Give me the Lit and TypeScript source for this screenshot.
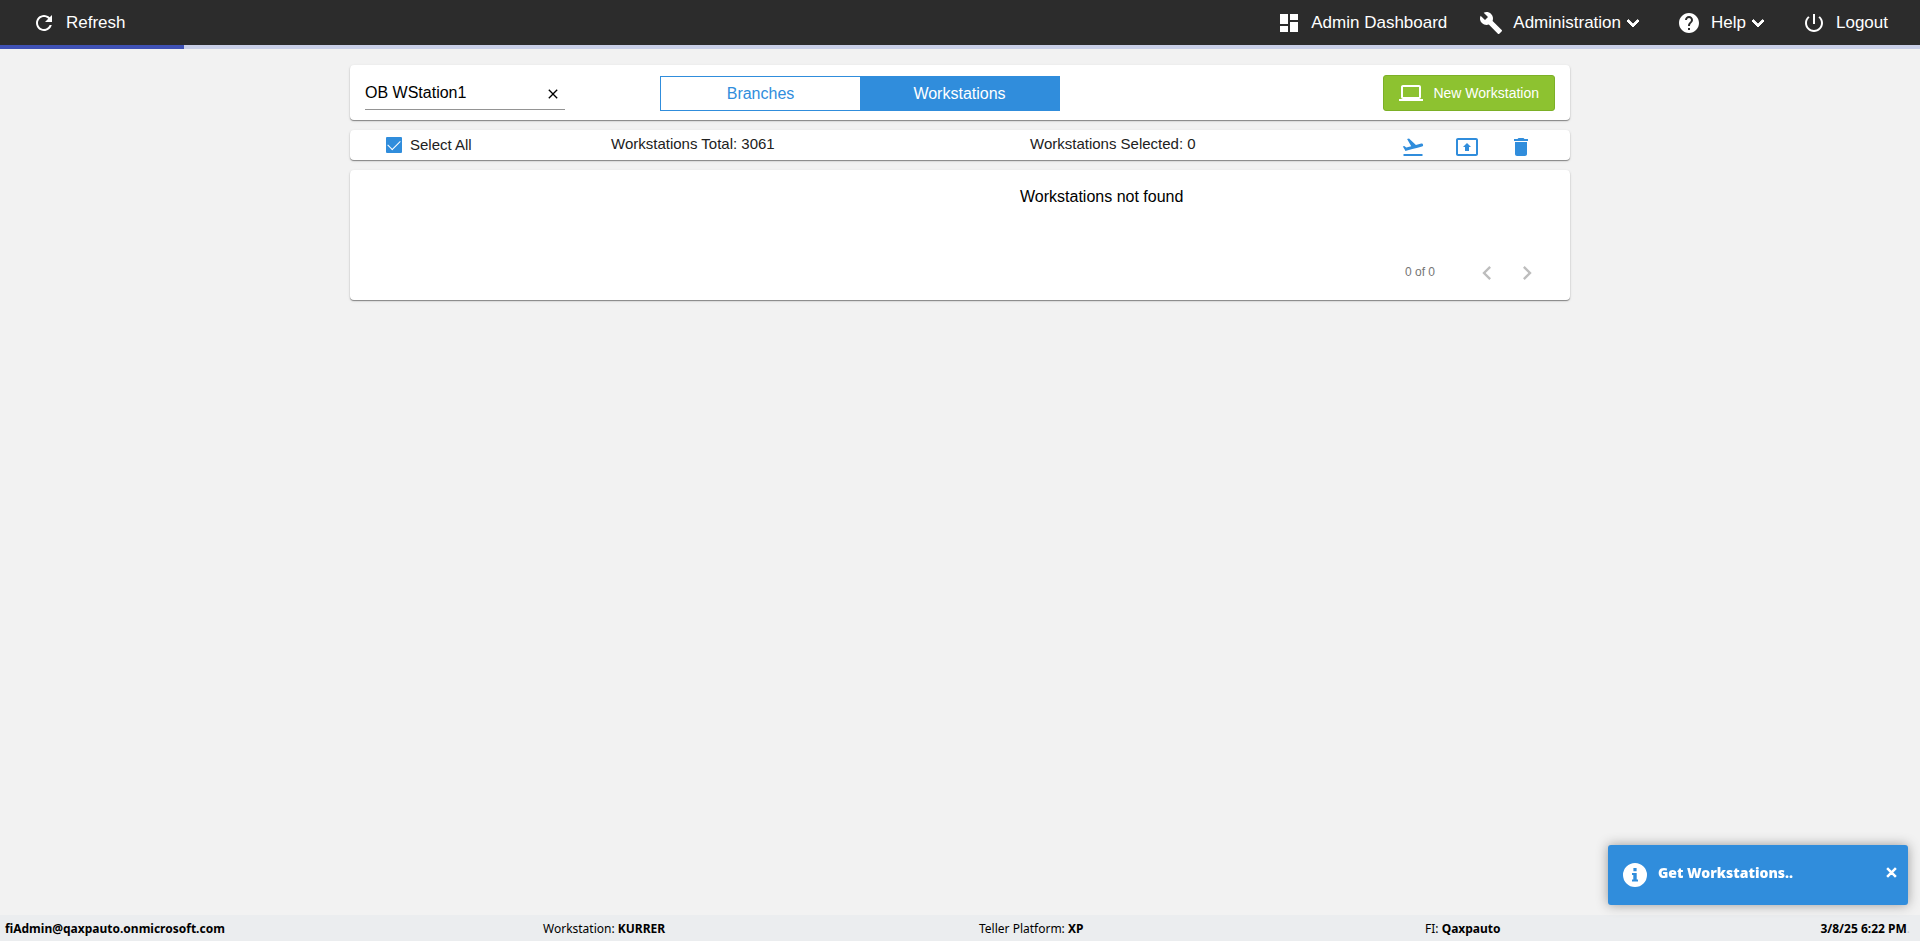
import { LitElement, html, svg, css } from "lit";
import { customElement, property, state } from "lit/decorators.js";

const icons: Record<string, string> = {
  refresh: "M17.65 6.35C16.2 4.9 14.21 4 12 4c-4.42 0-7.99 3.58-7.99 8s3.57 8 7.99 8c3.73 0 6.84-2.55 7.73-6h-2.08c-.82 2.33-3.04 4-5.65 4-3.31 0-6-2.69-6-6s2.69-6 6-6c1.66 0 3.14.69 4.22 1.78L13 11h7V4l-2.35 2.35z",
  dashboard: "M3 13h8V3H3v10zm0 8h8v-6H3v6zm10 0h8V11h-8v10zm0-18v6h8V3h-8z",
  build: "M22.7 19l-9.1-9.1c.9-2.3.4-5-1.5-6.9-2-2-5-2.4-7.4-1.3L9 6 6 9 1.6 4.7C.4 7.1.9 10.1 2.9 12.1c1.9 1.9 4.6 2.4 6.9 1.5l9.1 9.1c.4.4 1 .4 1.4 0l2.3-2.3c.5-.4.5-1.1.1-1.4z",
  help: "M12 2C6.48 2 2 6.48 2 12s4.48 10 10 10 10-4.48 10-10S17.52 2 12 2zm1 17h-2v-2h2v2zm2.07-7.75l-.9.92C13.45 12.9 13 13.5 13 15h-2v-.5c0-1.1.45-2.1 1.17-2.83l1.24-1.26c.37-.36.59-.86.59-1.41 0-1.1-.9-2-2-2s-2 .9-2 2H8c0-2.21 1.79-4 4-4s4 1.79 4 4c0 .88-.36 1.68-.93 2.25z",
  power: "M13 3h-2v10h2V3zm4.83 2.17l-1.42 1.42C17.99 7.86 19 9.81 19 12c0 3.87-3.13 7-7 7s-7-3.13-7-7c0-2.19 1.01-4.14 2.58-5.42L6.17 5.17C4.23 6.82 3 9.26 3 12c0 4.97 4.03 9 9 9s9-4.03 9-9c0-2.74-1.23-5.18-3.17-6.83z",
  expand: "M16.59 8.59L12 13.17 7.41 8.59 6 10l6 6 6-6z",
  close: "M19 6.41L17.59 5 12 10.59 6.41 5 5 6.41 10.59 12 5 17.59 6.41 19 12 13.41 17.59 19 19 17.59 13.41 12z",
  laptop: "M20 18c1.1 0 1.99-.9 1.99-2L22 6c0-1.100-.9-2-2-2H4c-1.100 0-2 .9-2 2v10c0 1.100.9 2 2 2H0v2h24v-2h-4zM4 6h16v10H4V6z",
  takeoff: "M2.500 19h19v2h-19zM22.070 9.640c-.21-.8-1.040-1.280-1.840-1.060L14.920 10l-6.900-6.430-1.930.51 4.140 7.170-4.970 1.330-1.970-1.540-1.450.39 1.820 3.160.77 1.330 1.600-.43 5.310-1.420 4.350-1.160L21 11.490c.81-.23 1.280-1.050 1.070-1.850z",
  present: "M21 3H3c-1.110 0-2 .89-2 2v14c0 1.110.89 2 2 2h18c1.110 0 2-.89 2-2V5c0-1.110-.89-2-2-2zm0 16.020H3V4.980h18v14.040zM10 12H8l4-4 4 4h-2v4h-4v-4z",
  trash: "M6 19c0 1.100.9 2 2 2h8c1.100 0 2-.9 2-2V7H6v12zM19 4h-3.500l-1-1h-5l-1 1H5v2h14V4z",
  left: "M15.410 7.410L14 6l-6 6 6 6 1.410-1.410L10.830 12z",
  right: "M10 6L8.590 7.410 13.170 12l-4.580 4.590L10 18l6-6z",
  info: "M12 0a12 12 0 1 0 0 24a12 12 0 1 0 0-24zM10.400 5h3.200v3.200h-3.200zM9 10h4.700v6.500h1.300V18.500H9v-2h1.300V12H9z",
};

@customElement("ui-icon")
class UiIcon extends LitElement {
  @property() name = "";
  static styles = css`
    :host { display: inline-flex; flex: none; width: 24px; height: 24px; }
    svg { width: 100%; height: 100%; fill: currentColor; fill-rule: evenodd; }
  `;
  render() {
    return html`<svg viewBox="0 0 24 24" aria-hidden="true">${svg`<path d=${icons[this.name] ?? ""}></path>`}</svg>`;
  }
}

@customElement("top-bar")
class TopBar extends LitElement {
  static styles = css`
    :host { display: block; }
    .bar {
      display: flex; justify-content: space-between; align-items: center;
      height: 45px; padding: 0 32px; background: #2c2c2c;
    }
    nav { display: flex; gap: 32px; }
    .item {
      display: flex; align-items: center; padding: 0; border: 0; background: none;
      color: #fff; font: 17px/24px "Liberation Sans", Arial, sans-serif;
      text-decoration: none; cursor: pointer;
    }
    .item span { margin-left: 10px; }
    .chevron { stroke: #fff; stroke-width: 1; }
    .progress { height: 4px; background: #c9cfe8; }
    .progress div { width: 9.6%; height: 100%; background: #3f51b5; }
  `;
  render() {
    return html`
      <header class="bar">
        <button class="item"><ui-icon name="refresh"></ui-icon><span>Refresh</span></button>
        <nav>
          <a class="item" href="#dashboard"><ui-icon name="dashboard"></ui-icon><span>Admin Dashboard</span></a>
          <button class="item"><ui-icon name="build"></ui-icon><span>Administration</span><ui-icon class="chevron" name="expand"></ui-icon></button>
          <button class="item"><ui-icon name="help"></ui-icon><span>Help</span><ui-icon class="chevron" name="expand"></ui-icon></button>
          <a class="item" href="#logout"><ui-icon name="power"></ui-icon><span>Logout</span></a>
        </nav>
      </header>
      <div class="progress" role="progressbar" aria-label="Loading"><div></div></div>
    `;
  }
}

@customElement("status-bar")
class StatusBar extends LitElement {
  static styles = css`
    footer {
      display: grid; grid-template-columns: 538fr 436fr 446fr 485fr; align-items: center;
      height: 26px; padding: 1px 10px 0 5px; box-sizing: border-box; background: #ebedef; color: #000;
      font: 12px/16px "Noto Sans", "Open Sans", sans-serif;
    }
    .end { display: flex; justify-content: space-between; }
    .dot { color: #c4c6c8; }
  `;
  render() {
    return html`
      <footer>
        <b>fiAdmin@qaxpauto.onmicrosoft.com</b>
        <span>Workstation: <b>KURRER</b></span>
        <span>Teller Platform: <b>XP</b></span>
        <div class="end">
          <span>FI: <b>Qaxpauto</b></span>
          <span><b>3/8/25 6:22 PM</b><span class="dot">.</span></span>
        </div>
      </footer>
    `;
  }
}

@customElement("app-root")
class AppRoot extends LitElement {
  @state() private query = "OB WStation1";

  static styles = css`
    :host {
      display: flex; flex-direction: column; min-height: 100vh;
      background: #f2f2f2; color: #000;
      font: 16px/20px "Liberation Sans", Arial, sans-serif;
    }
    * { box-sizing: border-box; }
    button { padding: 0; border: 0; background: none; color: inherit; font: inherit; cursor: pointer; }
    main {
      flex: 1; display: flex; flex-direction: column; gap: 10px;
      width: 100%; max-width: 1220px; margin: 0 auto; padding-top: 16px;
    }
    .card {
      background: #fff; border-radius: 4px;
      box-shadow: 0 1px 1px rgba(0, 0, 0, 0.4), 0 1px 3px rgba(0, 0, 0, 0.12);
    }
    .tools { display: flex; align-items: center; padding: 10px 15px 9px; }
    .search {
      display: flex; align-items: center; width: 200px; height: 34px;
      border-bottom: 1px solid #949494;
    }
    .search input {
      flex: 1; min-width: 0; padding: 1px 0 0; border: 0; outline: 0;
      background: none; color: #000; font: inherit;
    }
    .clear { display: flex; margin-right: 4px; padding-top: 3px; }
    .clear ui-icon { width: 16px; height: 16px; }
    .tabs { display: flex; width: 400px; height: 35px; margin-left: 95px; border: 1px solid #308ddc; }
    .tabs button { flex: 1; padding-top: 2px; color: #308ddc; }
    .tabs .on { background: #308ddc; color: #fff; }
    .new {
      display: flex; align-items: center; gap: 10px; height: 36px;
      margin-left: auto; padding: 0 15px; border: 1px solid #7cb027; border-radius: 3px;
      background: #8dc230; color: #fff; font-size: 14px;
    }
    .summary {
      display: grid; grid-template-columns: 225px 419px 1fr auto; align-items: center;
      height: 30px; padding: 0 37px 0 36px; color: #212121; font-size: 15px;
    }
    .summary p { margin: 0; padding-bottom: 2px; }
    .select { display: flex; align-items: center; gap: 8px; }
    .select input {
      appearance: none; width: 16px; height: 16px; margin: 0;
      border-radius: 1px; background: #308ddc; display: grid; place-items: center;
    }
    .select input:checked::before {
      content: ""; width: 11px; height: 6px; margin-bottom: 3px;
      border: solid #fff; border-width: 0 0 1px 1px; transform: rotate(-45deg);
    }
    .actions { display: flex; gap: 30px; padding-top: 4px; color: #308ddc; }
    .actions button { display: flex; }
    .empty { margin: 0; padding: 17px 0 0 670px; }
    .results { display: flex; flex-direction: column; justify-content: space-between; height: 130px; }
    .pager {
      display: flex; justify-content: flex-end; align-items: center;
      padding: 0 29px 13px 0; color: #bdbdbd;
    }
    .pager span { margin-right: 38px; padding-bottom: 3px; color: #757575; font-size: 12px; }
    .pager button { display: flex; margin-left: 12px; }
    .pager button:first-of-type { margin-left: 0; }
    .pager ui-icon { width: 28px; height: 28px; }
    .toast {
      position: fixed; right: 12px; bottom: 36px; display: flex; align-items: center;
      width: 300px; height: 60px; padding: 0 9px 0 15px; border-radius: 3px;
      background: #308ddc; color: #fff; box-shadow: 0 0 12px #999;
      font: 900 14px/20px "Noto Sans", "Open Sans", sans-serif;
    }
    .toast p { flex: 1; margin: 0 0 4px 11px; }
    .toast button { display: flex; margin-bottom: 5px; }
    .toast button ui-icon { width: 15px; height: 15px; stroke: #fff; stroke-width: 2; }
  `;

  render() {
    return html`
      <top-bar></top-bar>
      <main>
        <section class="card tools">
          <div class="search">
            <input type="text" aria-label="Search" .value=${this.query}
              @input=${(e: Event) => (this.query = (e.target as HTMLInputElement).value)} />
            <button class="clear" aria-label="Clear" @click=${() => (this.query = "")}><ui-icon name="close"></ui-icon></button>
          </div>
          <div class="tabs">
            <button>Branches</button>
            <button class="on">Workstations</button>
          </div>
          <button class="new"><ui-icon name="laptop"></ui-icon>New Workstation</button>
        </section>
        <section class="card summary">
          <label class="select"><input type="checkbox" checked />Select All</label>
          <p>Workstations Total: 3061</p>
          <p>Workstations Selected: 0</p>
          <div class="actions">
            <button aria-label="Release"><ui-icon name="takeoff"></ui-icon></button>
            <button aria-label="Update"><ui-icon name="present"></ui-icon></button>
            <button aria-label="Delete"><ui-icon name="trash"></ui-icon></button>
          </div>
        </section>
        <section class="card results">
          <p class="empty">Workstations not found</p>
          <div class="pager">
            <span>0 of 0</span>
            <button aria-label="Previous page"><ui-icon name="left"></ui-icon></button>
            <button aria-label="Next page"><ui-icon name="right"></ui-icon></button>
          </div>
        </section>
      </main>
      <status-bar></status-bar>
      <div class="toast" role="status">
        <ui-icon name="info"></ui-icon>
        <p>Get Workstations..</p>
        <button aria-label="Close"><ui-icon name="close"></ui-icon></button>
      </div>
    `;
  }
}
